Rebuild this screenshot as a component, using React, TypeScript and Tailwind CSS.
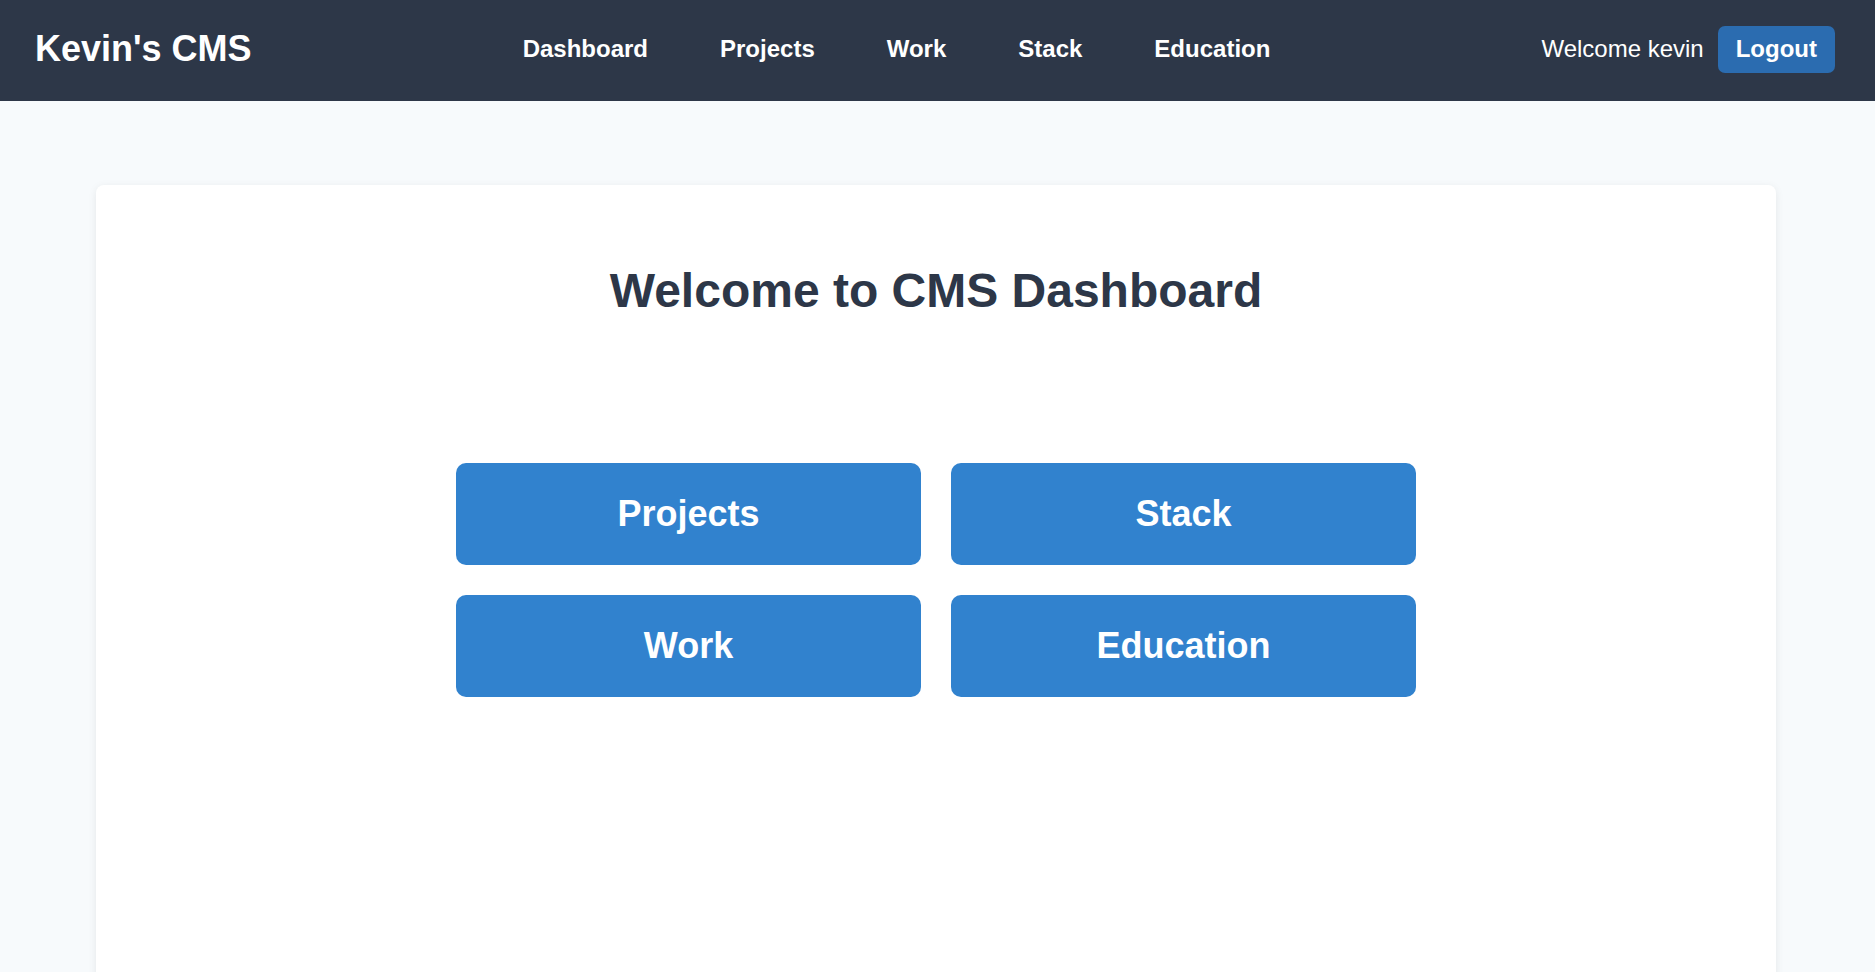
import React from "react";

const NAV_LINKS = ["Dashboard", "Projects", "Work", "Stack", "Education"];
const TILES = ["Projects", "Stack", "Work", "Education"];

// Kopfzeile: Logo, Navigation und Benutzerbereich.
function Header() {
  return (
    <header className="flex h-[101px] items-center justify-between bg-[#2d3748] pb-[3px] pl-[35px] pr-[40px] text-white">
      <a href="#" className="text-[36px] font-bold leading-[40px]">
        Kevin's CMS
      </a>
      <nav className="flex items-center gap-[72px]">
        {NAV_LINKS.map((link) => (
          <a key={link} href="#" className="text-[24px] font-bold leading-[28px]">
            {link}
          </a>
        ))}
      </nav>
      <div className="flex items-center">
        <span className="mr-[14px] text-[24px] leading-[28px]">Welcome kevin</span>
        <button
          type="button"
          className="flex h-[47px] items-center rounded-[7px] bg-[#2b6cb0] px-[18px] text-[24px] font-bold leading-[28px] text-white"
        >
          Logout
        </button>
      </div>
    </header>
  );
}

export default function App() {
  return (
    <div
      className="min-h-screen bg-[#f7fafc]"
      style={{ fontFamily: '"Liberation Sans", Arial, Helvetica, sans-serif' }}
    >
      <Header />
      <main className="pl-[96px] pr-[99px] pt-[84px]">
        <div className="min-h-[840px] rounded-[8px] bg-white pt-[78px] shadow-[0_2px_8px_rgba(0,0,0,0.08)]">
          <h1 className="text-center text-[48px] font-bold leading-[56px] text-[#2d3748]">
            Welcome to CMS Dashboard
          </h1>
          <div className="mx-auto mt-[144px] grid w-[960px] grid-cols-2 gap-[30px]">
            {TILES.map((tile) => (
              <a
                key={tile}
                href="#"
                className="flex h-[102px] items-center justify-center rounded-[10px] bg-[#3182ce] text-[36px] font-bold leading-[40px] text-white"
              >
                {tile}
              </a>
            ))}
          </div>
        </div>
      </main>
    </div>
  );
}
